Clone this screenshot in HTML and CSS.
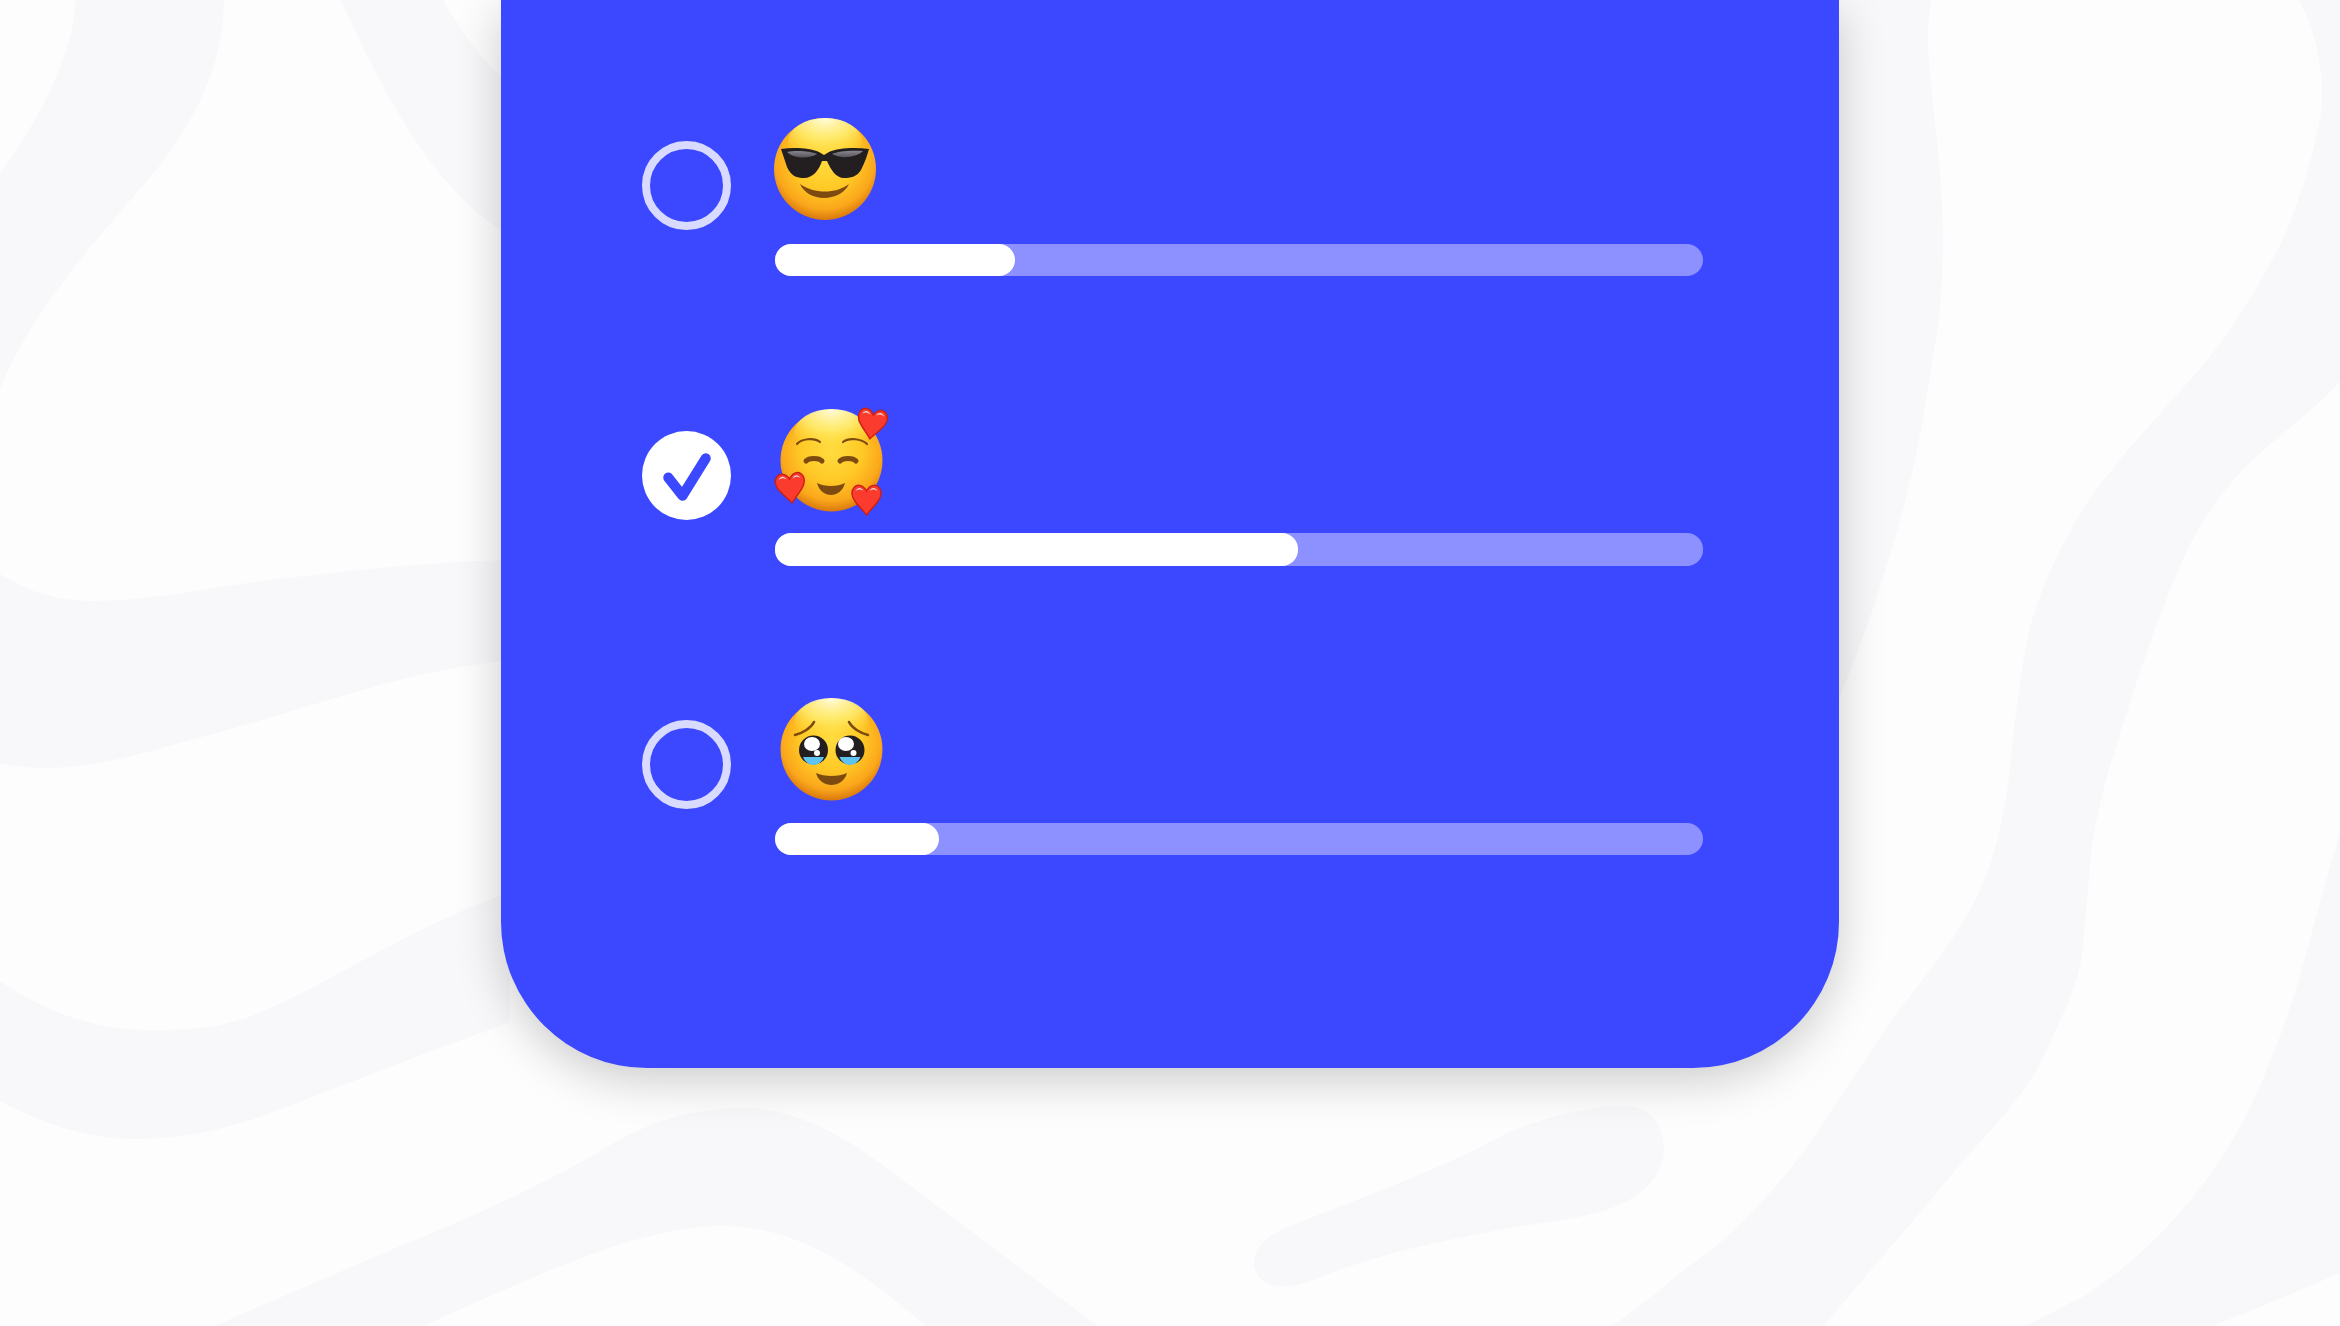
FILE: index.html
```html
<!DOCTYPE html>
<html lang="en">
<head>
  <meta charset="UTF-8">
  <meta name="viewport" content="width=device-width, initial-scale=1.0">
  <title>Emoji Poll</title>
  <link rel="stylesheet" href="styles.css">
</head>
<body>
  <!-- wavy background -->
  <svg class="waves" viewBox="0 0 2340 1326" aria-hidden="true">
    <path d="M75 0C75 50 40 120 0 173V389C35 300 120 215 160 165C190 125 224 70 224 0Z"/>
    <path d="M341 0C375 75 430 190 510 236V84C480 60 460 28 443 0Z"/>
    <path d="M0 574C28 592 58 601 90 601C145 601 200 590 254 582C335 572 420 562 510 560V660C470 665 440 670 403 679C330 698 260 722 194 739C140 754 95 768 45 768C30 768 15 766 0 764Z"/>
    <path d="M0 981C45 1012 95 1030 149 1030C190 1030 222 1028 254 1015C295 998 335 975 373 955C415 932 460 910 510 892V1022L448 1045C385 1068 320 1095 254 1119C215 1132 175 1139 134 1139C85 1139 40 1122 0 1101Z"/>
    <path d="M214 1326L398 1247C470 1218 550 1182 614 1143C660 1117 700 1108 743 1108C790 1108 835 1130 880 1163L1098 1326H926C860 1270 800 1226 721 1226C640 1226 540 1274 423 1326Z"/>
    <path d="M1626 1106C1650 1106 1664 1125 1664 1150C1664 1180 1635 1203 1596 1213C1560 1222 1520 1225 1489 1232C1420 1245 1370 1258 1328 1274C1305 1284 1290 1288 1278 1286C1262 1284 1254 1274 1254 1262C1254 1245 1272 1232 1293 1225C1360 1198 1440 1170 1507 1133C1550 1115 1590 1106 1626 1106Z"/>
    <path d="M1800 0H1931C1926 30 1928 60 1932 95C1938 150 1944 200 1943 254C1942 290 1940 320 1933 355C1925 410 1915 470 1896 535C1880 590 1860 650 1839 698L1800 740Z"/>
    <path d="M2299 0C2318 35 2326 80 2320 119C2312 160 2300 200 2283 239C2262 280 2240 318 2209 358C2165 410 2120 455 2089 500C2060 545 2042 585 2030 627C2018 680 2014 735 2007 791C2000 835 1990 875 1970 910C1948 950 1922 980 1895 1015C1865 1060 1835 1105 1806 1149C1770 1195 1730 1240 1686 1268C1660 1290 1635 1310 1612 1326H1824C1870 1270 1915 1220 1958 1167C1995 1125 2030 1090 2047 1049C2065 1010 2076 990 2082 956C2086 915 2088 885 2092 846C2098 810 2105 780 2117 744C2140 670 2160 610 2187 550C2205 515 2230 480 2256 457C2285 430 2315 410 2340 381V0Z"/>
    <path d="M2340 833C2325 880 2312 935 2296 989C2280 1040 2262 1085 2241 1125C2205 1190 2150 1255 2082 1297L2025 1326H2212C2260 1308 2300 1290 2340 1273Z"/>
  </svg>

  <!-- shared paint for the emoji -->
  <svg class="defs" aria-hidden="true">
    <defs>
      <radialGradient id="face" cx="50%" cy="40%" r="60%">
        <stop offset="0" stop-color="#ffdc40"/>
        <stop offset=".5" stop-color="#ffc926"/>
        <stop offset=".82" stop-color="#fba71b"/>
        <stop offset="1" stop-color="#d9780e"/>
      </radialGradient>
      <radialGradient id="shine" cx="50%" cy="0%" r="80%">
        <stop offset="0" stop-color="#fffde0"/>
        <stop offset=".55" stop-color="#fff27a" stop-opacity=".75"/>
        <stop offset="1" stop-color="#ffe850" stop-opacity="0"/>
      </radialGradient>
      <linearGradient id="lens" x1="0" y1="0" x2="0" y2="1">
        <stop offset="0" stop-color="#8a8790"/>
        <stop offset="1" stop-color="#55525a"/>
      </linearGradient>
      <g id="heart">
        <path d="M0 -9C-3 -15 -9 -16 -12 -13C-16 -9 -15 -3 -11 2C-8 6 -3 11 0 15C3 11 8 6 11 2C15 -3 16 -9 12 -13C9 -16 3 -15 0 -9Z" fill="#fb3b2e" stroke="#c91f14" stroke-width="1.4"/>
        <path d="M-11 -9C-9 -13 -5 -13 -3 -9C-6 -11 -8 -11 -11 -9ZM3 -9C5 -13 9 -13 11 -9C8 -11 6 -11 3 -9Z" fill="#e8d8d4"/>
      </g>
    </defs>
  </svg>

  <div class="card">
    <div class="option">
      <span class="radio"></span>
      <div class="result">
        <svg class="emoji" viewBox="0 0 120 110" role="img" aria-label="smiling face with sunglasses">
          <circle cx="51" cy="51" r="51" fill="url(#face)"/>
          <ellipse cx="51" cy="24" rx="37" ry="24" fill="url(#shine)"/>
          <path d="M7 31C20 29 36 30 45 34L50 37L55 34C64 30 80 29 95 31C93 38 91 44 87 52C83 59 76 60 70 60C62 60 57 52 53 43H48C45 52 39 60 30 60C23 60 17 58 13 49C11 43 9 37 7 31Z" fill="#231f20"/>
          <path d="M13 34C22 32 36 33 43 36C36 41 20 41 13 34ZM58 36C64 33 78 32 89 33C82 40 66 41 58 36Z" fill="url(#lens)"/>
          <path d="M26 66C40 76 62 76 75 66C71 75 60 80 50 80C40 80 30 75 26 66Z" fill="#7d4a10"/>
        </svg>
        <div class="track"><div class="fill" style="width: 25.9%"></div></div>
      </div>
    </div>

    <div class="option">
      <span class="radio checked">
        <svg class="check" viewBox="0 0 88 88" aria-hidden="true">
          <path d="M26 46L40 64L63 27" fill="none" stroke="#3c48ff" stroke-width="10" stroke-linecap="round" stroke-linejoin="round"/>
        </svg>
      </span>
      <div class="result">
        <svg class="emoji" viewBox="0 0 120 110" role="img" aria-label="smiling face with hearts">
          <circle cx="57.5" cy="52.5" r="51" fill="url(#face)"/>
          <ellipse cx="57.5" cy="25" rx="37" ry="24" fill="url(#shine)"/>
          <path d="M23 36C27 31 40 29 46 34M69 34C75 29 88 31 93 36" fill="none" stroke="#7d4a10" stroke-width="2.2" stroke-linecap="round"/>
          <path d="M32 53C35 49.500 45 49.500 48 53M66 53C69 49.500 79 49.500 82 53" fill="none" stroke="#7d4a10" stroke-width="5" stroke-linecap="round"/>
          <path d="M43 75C50 79 64 79 71 75C69 83 63 87 57 87C51 87 45 83 43 75Z" fill="#7d4a10"/>
          <use href="#heart" transform="translate(98 16) rotate(8)"/>
          <use href="#heart" transform="translate(16.5 80) rotate(-6)"/>
          <use href="#heart" transform="translate(92.5 92)"/>
        </svg>
        <div class="track"><div class="fill" style="width: 56.4%"></div></div>
      </div>
    </div>

    <div class="option">
      <span class="radio"></span>
      <div class="result">
        <svg class="emoji" viewBox="0 0 120 110" role="img" aria-label="face holding back tears">
          <circle cx="57.5" cy="52.5" r="51" fill="url(#face)"/>
          <ellipse cx="57.5" cy="25" rx="37" ry="24" fill="url(#shine)"/>
          <path d="M21 38C29 36 37 31 40 25M75 25C78 31 86 36 94 38" fill="none" stroke="#7d4a10" stroke-width="2.6" stroke-linecap="round"/>
          <circle cx="39.5" cy="53" r="14.5" fill="#231f20"/>
          <circle cx="76" cy="53" r="14.5" fill="#231f20"/>
          <path d="M29 60H50C48 65 44 68 39.5 68C35 68 31 65 29 60ZM65.500 60H86.500C84.500 65 80.500 68 76 68C71.500 68 67.500 65 65.500 60Z" fill="#5ec3ee"/>
          <ellipse cx="38" cy="47" rx="8" ry="7" fill="#fff"/>
          <ellipse cx="72" cy="47" rx="8" ry="7" fill="#fff"/>
          <circle cx="43" cy="56" r="3" fill="#fff"/>
          <circle cx="79.500" cy="56" r="3" fill="#fff"/>
          <path d="M42 76C50 80 65 80 73 76C71 84 64 88 57.500 88C51 88 44 84 42 76Z" fill="#7d4a10"/>
        </svg>
        <div class="track"><div class="fill" style="width: 17.7%"></div></div>
      </div>
    </div>
  </div>
</body>
</html>
```

FILE: styles.css
```css
html, body {
  margin: 0;
  height: 100%;
}
body {
  position: relative;
  height: 1326px;
  overflow: hidden;
  background: #fdfdfd;
}
.waves {
  position: absolute;
  top: 0;
  left: 0;
  width: 2340px;
  height: 1326px;
  fill: #f8f8fa;
}
.defs {
  position: absolute;
  width: 0;
  height: 0;
}
.card {
  position: relative;
  box-sizing: border-box;
  width: 1338px;
  height: 1068px;
  margin-left: 501px;
  padding: 118px 136px 0 141px;
  background: #3c48ff;
  border-radius: 0 0 146px 146px;
  box-shadow: 0 12px 48px rgba(0, 0, 0, 0.2);
}
.option {
  display: flex;
  gap: 44px;
  height: 289.5px;
}
.radio {
  box-sizing: border-box;
  flex: none;
  width: 89px;
  height: 89px;
  margin-top: 23px;
  border: 8px solid #d8daff;
  border-radius: 50%;
}
.radio.checked {
  border: none;
  background: #fff;
}
.check {
  display: block;
  width: 89px;
  height: 89px;
}
.result {
  flex: 1;
}
.emoji {
  display: block;
  width: 120px;
  height: 110px;
  margin: 0 0 15.5px -1px;
  overflow: visible;
}
.track {
  height: 32.5px;
  border-radius: 16px;
  background: #8c91ff;
}
.fill {
  height: 100%;
  border-radius: 16px;
  background: #fff;
}
```
